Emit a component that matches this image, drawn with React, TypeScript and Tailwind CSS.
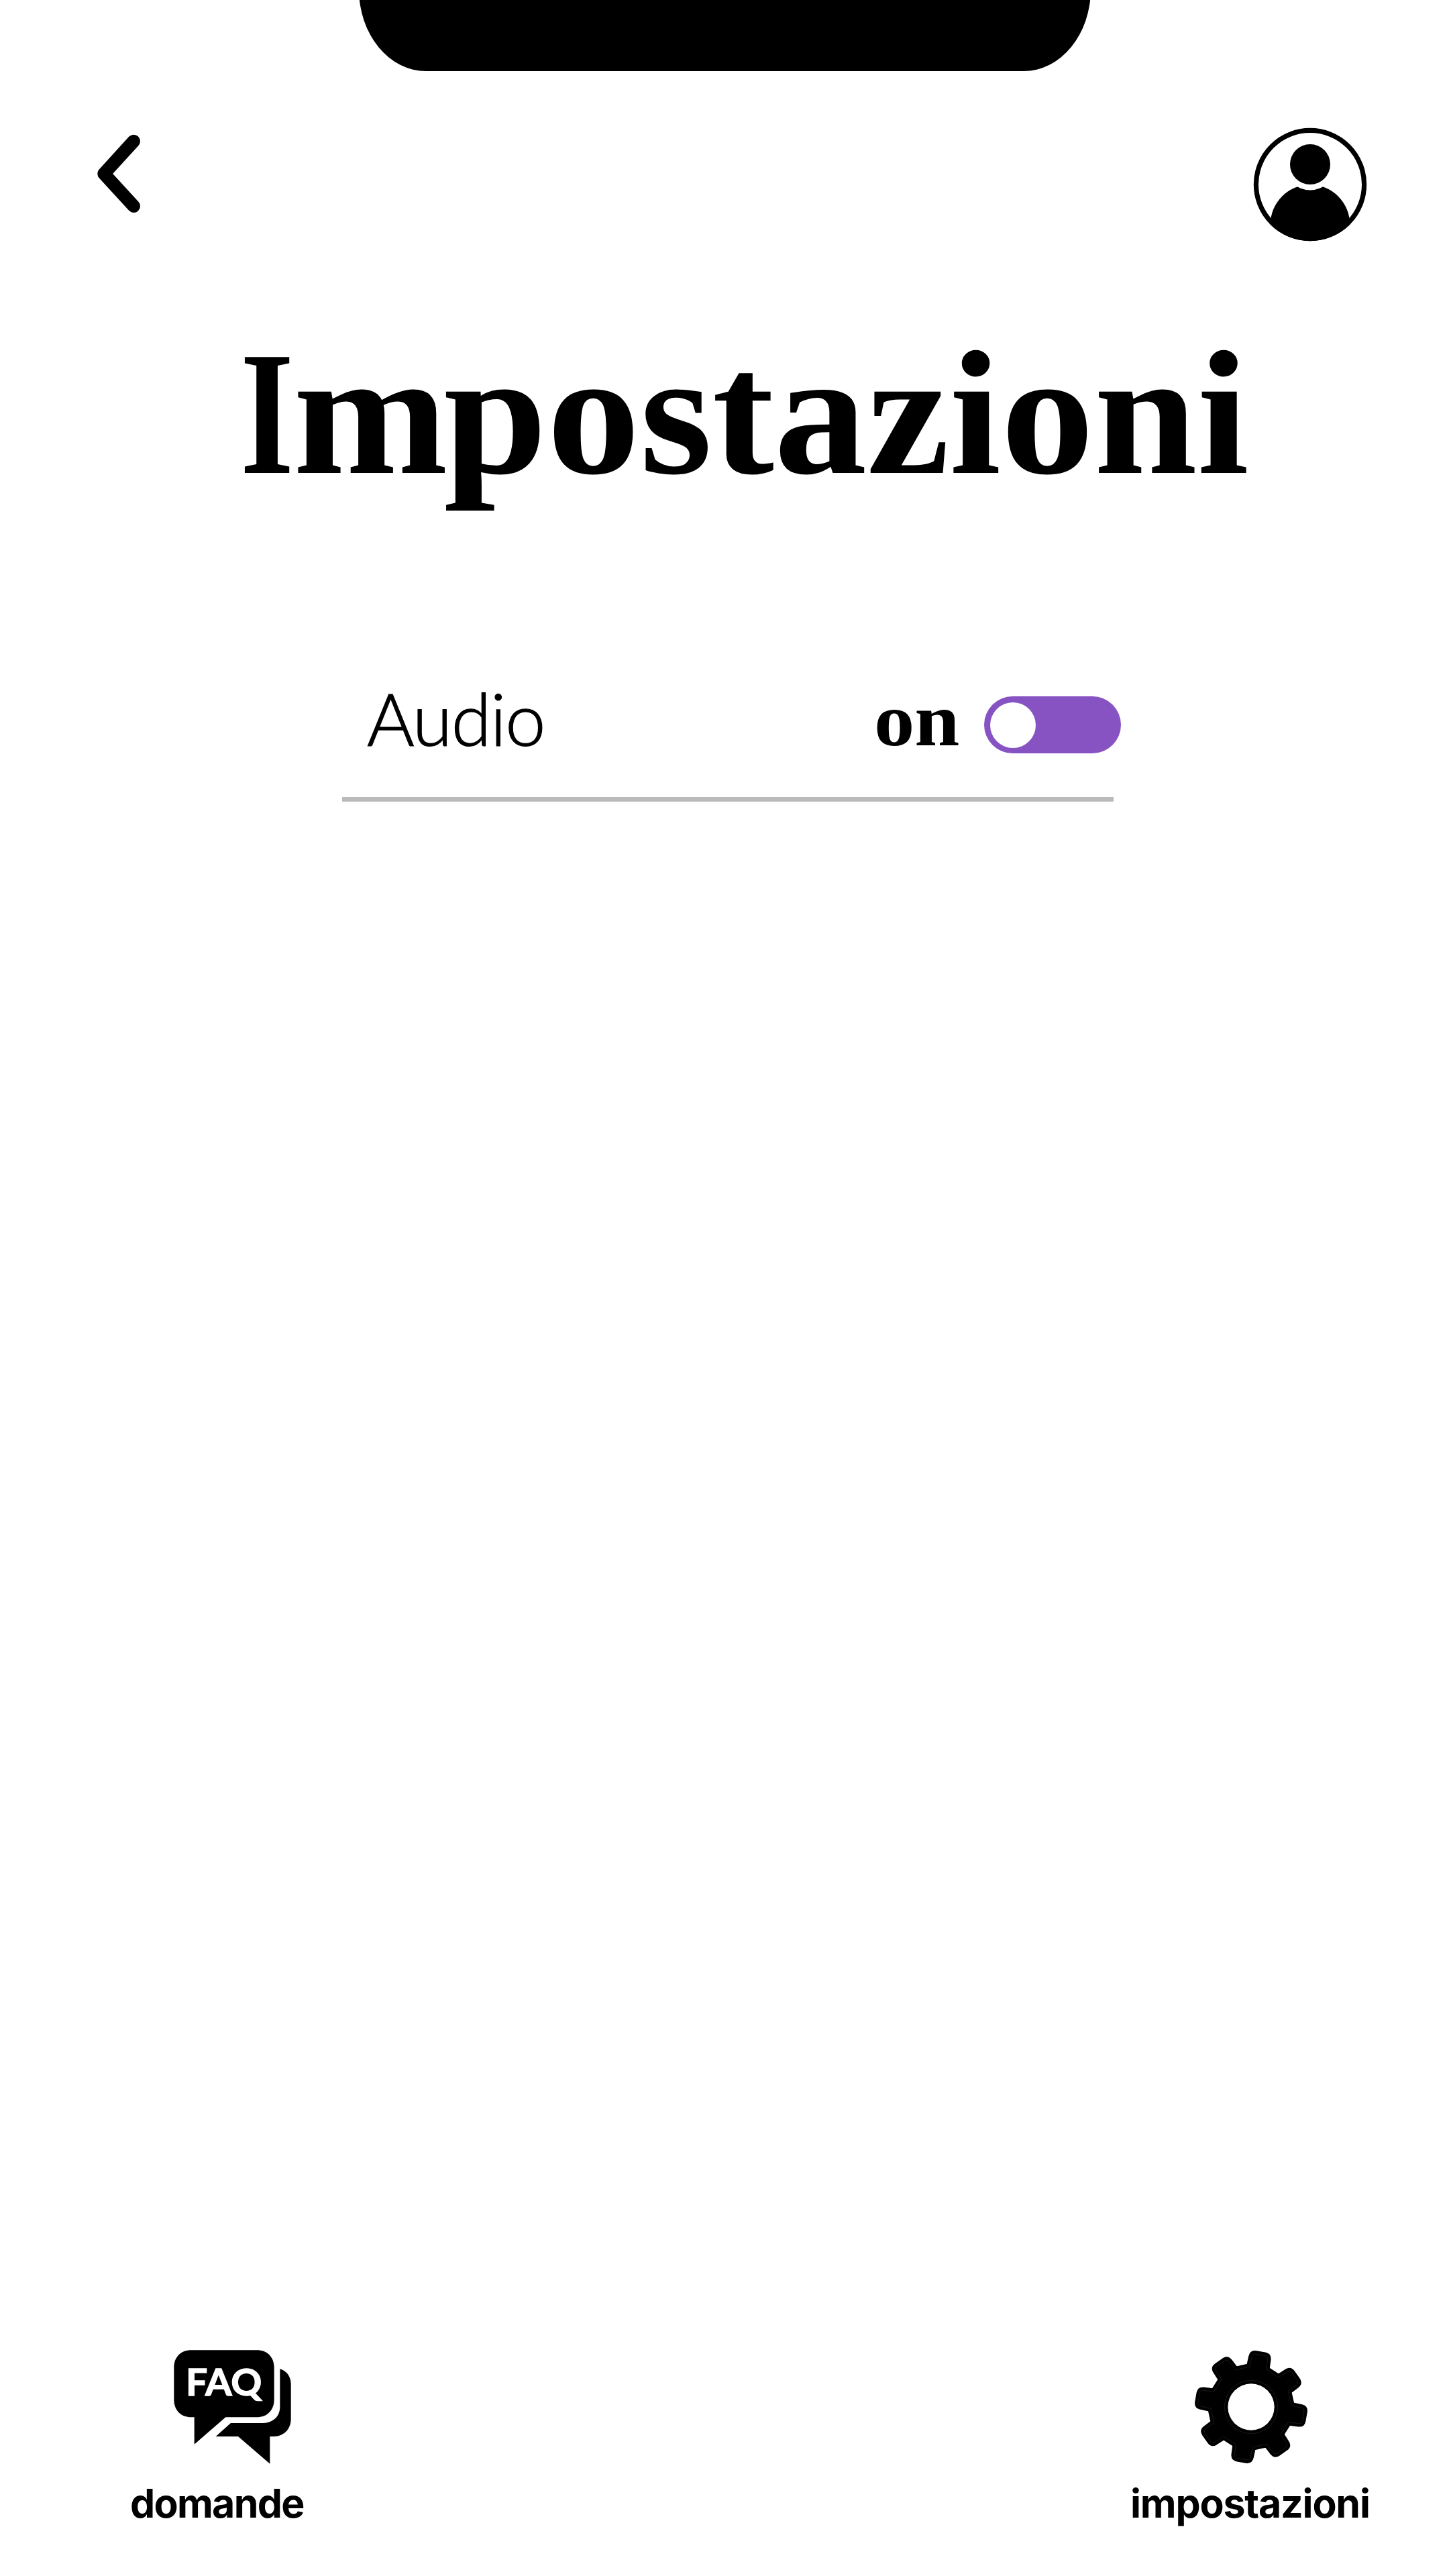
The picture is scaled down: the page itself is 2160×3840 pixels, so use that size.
import React, { useState } from "react";

function BackIcon() {
  return (
    <svg className="block h-[120px] w-[80px]" viewBox="0 0 80 120" fill="none">
      <path
        d="M64.3 11.4L20 60L64.3 108.3"
        stroke="black"
        strokeWidth="19.4"
        strokeLinecap="round"
        strokeLinejoin="round"
      />
    </svg>
  );
}

function ProfileIcon() {
  return (
    <svg className="block size-[170px]" viewBox="0 0 170 170">
      <defs>
        <clipPath id="disc">
          <circle cx="85" cy="85" r="84.2" />
        </clipPath>
      </defs>
      <circle cx="85" cy="85" r="80.6" fill="white" stroke="black" strokeWidth="7.2" />
      <circle cx="85" cy="144.5" r="59.2" clipPath="url(#disc)" />
      <circle cx="85" cy="55" r="38.5" fill="white" />
      <circle cx="85" cy="55" r="30" />
    </svg>
  );
}

function FaqIcon() {
  return (
    <svg className="block h-[170px] w-[175px]" viewBox="267 71 525 510">
      <path d="M346 72H638C685 72 716 103 716 150V293C716 340 685 372 638 372H499L359 493V372H346C299 372 268 341 268 293V150C268 103 299 72 346 72Z" />
      <path d="M742 156C770 163 791 190 791 222V380C791 425 760 457 715 458H697V580L555 458H455L522 398H660C710 398 742 370 742 325Z" />
      <text
        x="321"
        y="276"
        fill="white"
        stroke="white"
        strokeWidth="4"
        className="font-['Lato',sans-serif] text-[166px] font-bold"
        textLength="340"
        lengthAdjust="spacingAndGlyphs"
      >
        FAQ
      </text>
    </svg>
  );
}

function gearOutline() {
  const steps: string[] = [];
  for (let i = 0; i < 8; i++) {
    const a = ((10 + i * 45) * Math.PI) / 180;
    const p = (x: number, y: number) =>
      `${(x * Math.cos(a) - y * Math.sin(a)).toFixed(1)} ${(x * Math.sin(a) + y * Math.cos(a)).toFixed(1)}`;
    steps.push(
      `${i === 0 ? "M" : "L"}${p(-38, -176)}L${p(-36, -222)}Q${p(-35, -237)} ${p(-20, -237)}L${p(20, -237)}Q${p(35, -237)} ${p(36, -222)}L${p(38, -176)}`,
    );
  }
  return steps.join("") + "Z";
}

function GearIcon() {
  const outline = gearOutline();
  return (
    <svg className="block size-[170px]" viewBox="-255 -255 510 510">
      <path d={outline} fill="black" stroke="black" strokeWidth="29" strokeLinejoin="round" />
      <path d={outline} fill="none" stroke="#333333" strokeWidth="1.5" />
      <circle r="119" fill="none" stroke="#333333" strokeWidth="1.5" />
      <circle r="104" fill="white" />
    </svg>
  );
}

export default function App() {
  const [on, setOn] = useState(true);
  return (
    <main className="flex h-[3840px] w-[2160px] flex-col overflow-hidden bg-white text-black">
      <div className="ml-[535px] h-[106px] w-[1091px] shrink-0 overflow-hidden">
        <div className="-mt-[16px] h-[122px] bg-black [border-radius:0_0_100px_100px/0_0_122px_122px]" />
      </div>

      <header className="flex h-[390px] shrink-0 items-start justify-between pl-[135px] pr-[122px] pt-[84px]">
        <button aria-label="Indietro" className="mt-[9px]">
          <BackIcon />
        </button>
        <button aria-label="Profilo">
          <ProfileIcon />
        </button>
      </header>

      <h1 className="h-[240px] shrink-0 whitespace-nowrap pl-[358px] font-['Liberation_Serif',serif] text-[264px] font-bold leading-[240px]">
        <span className="-mr-[24px] inline-block origin-left scale-x-[0.78]">I</span>
        <span className="inline-block origin-left scale-x-[1.049]">
          <span className="tracking-[-6px]">m</span>postazioni
        </span>
      </h1>

      <section className="ml-[510px] mt-[274px] flex h-[185px] w-[1150px] shrink-0 items-start border-b-[7px] border-[#bababa] pl-[37px]">
        <span className="font-['Lato',sans-serif] text-[108px] font-light leading-[120px] tracking-[-1.5px] [-webkit-text-stroke:1.2px_black]">
          Audio
        </span>
        <div className="-mr-[11px] ml-auto flex items-start gap-[37px]">
          <span className="mt-[3px] origin-right scale-x-[1.067] font-['Liberation_Serif',serif] text-[113px] font-bold leading-[120px]">
            on
          </span>
          <button
            role="switch"
            aria-checked={on}
            aria-label="Audio"
            onClick={() => setOn(!on)}
            className="mt-[28px] flex h-[85px] w-[204px] items-center rounded-full bg-[#8753c3] px-[9px]"
          >
            <span className="size-[68px] rounded-full bg-white" />
          </button>
        </div>
      </section>

      <nav className="mt-auto flex h-[337px] shrink-0 items-start justify-between pl-[194px] pr-[117px] font-['Inter',sans-serif] text-[59px] font-bold leading-[60px]">
        <a className="flex flex-col items-start">
          <span className="ml-[65px]">
            <FaqIcon />
          </span>
          <span className="mt-[29px] tracking-[-1.7px]">domande</span>
        </a>
        <a className="flex w-[358px] flex-col items-start">
          <span className="ml-[95px]">
            <GearIcon />
          </span>
          <span className="mt-[29px] tracking-[-1.2px]">impostazioni</span>
        </a>
      </nav>
    </main>
  );
}
